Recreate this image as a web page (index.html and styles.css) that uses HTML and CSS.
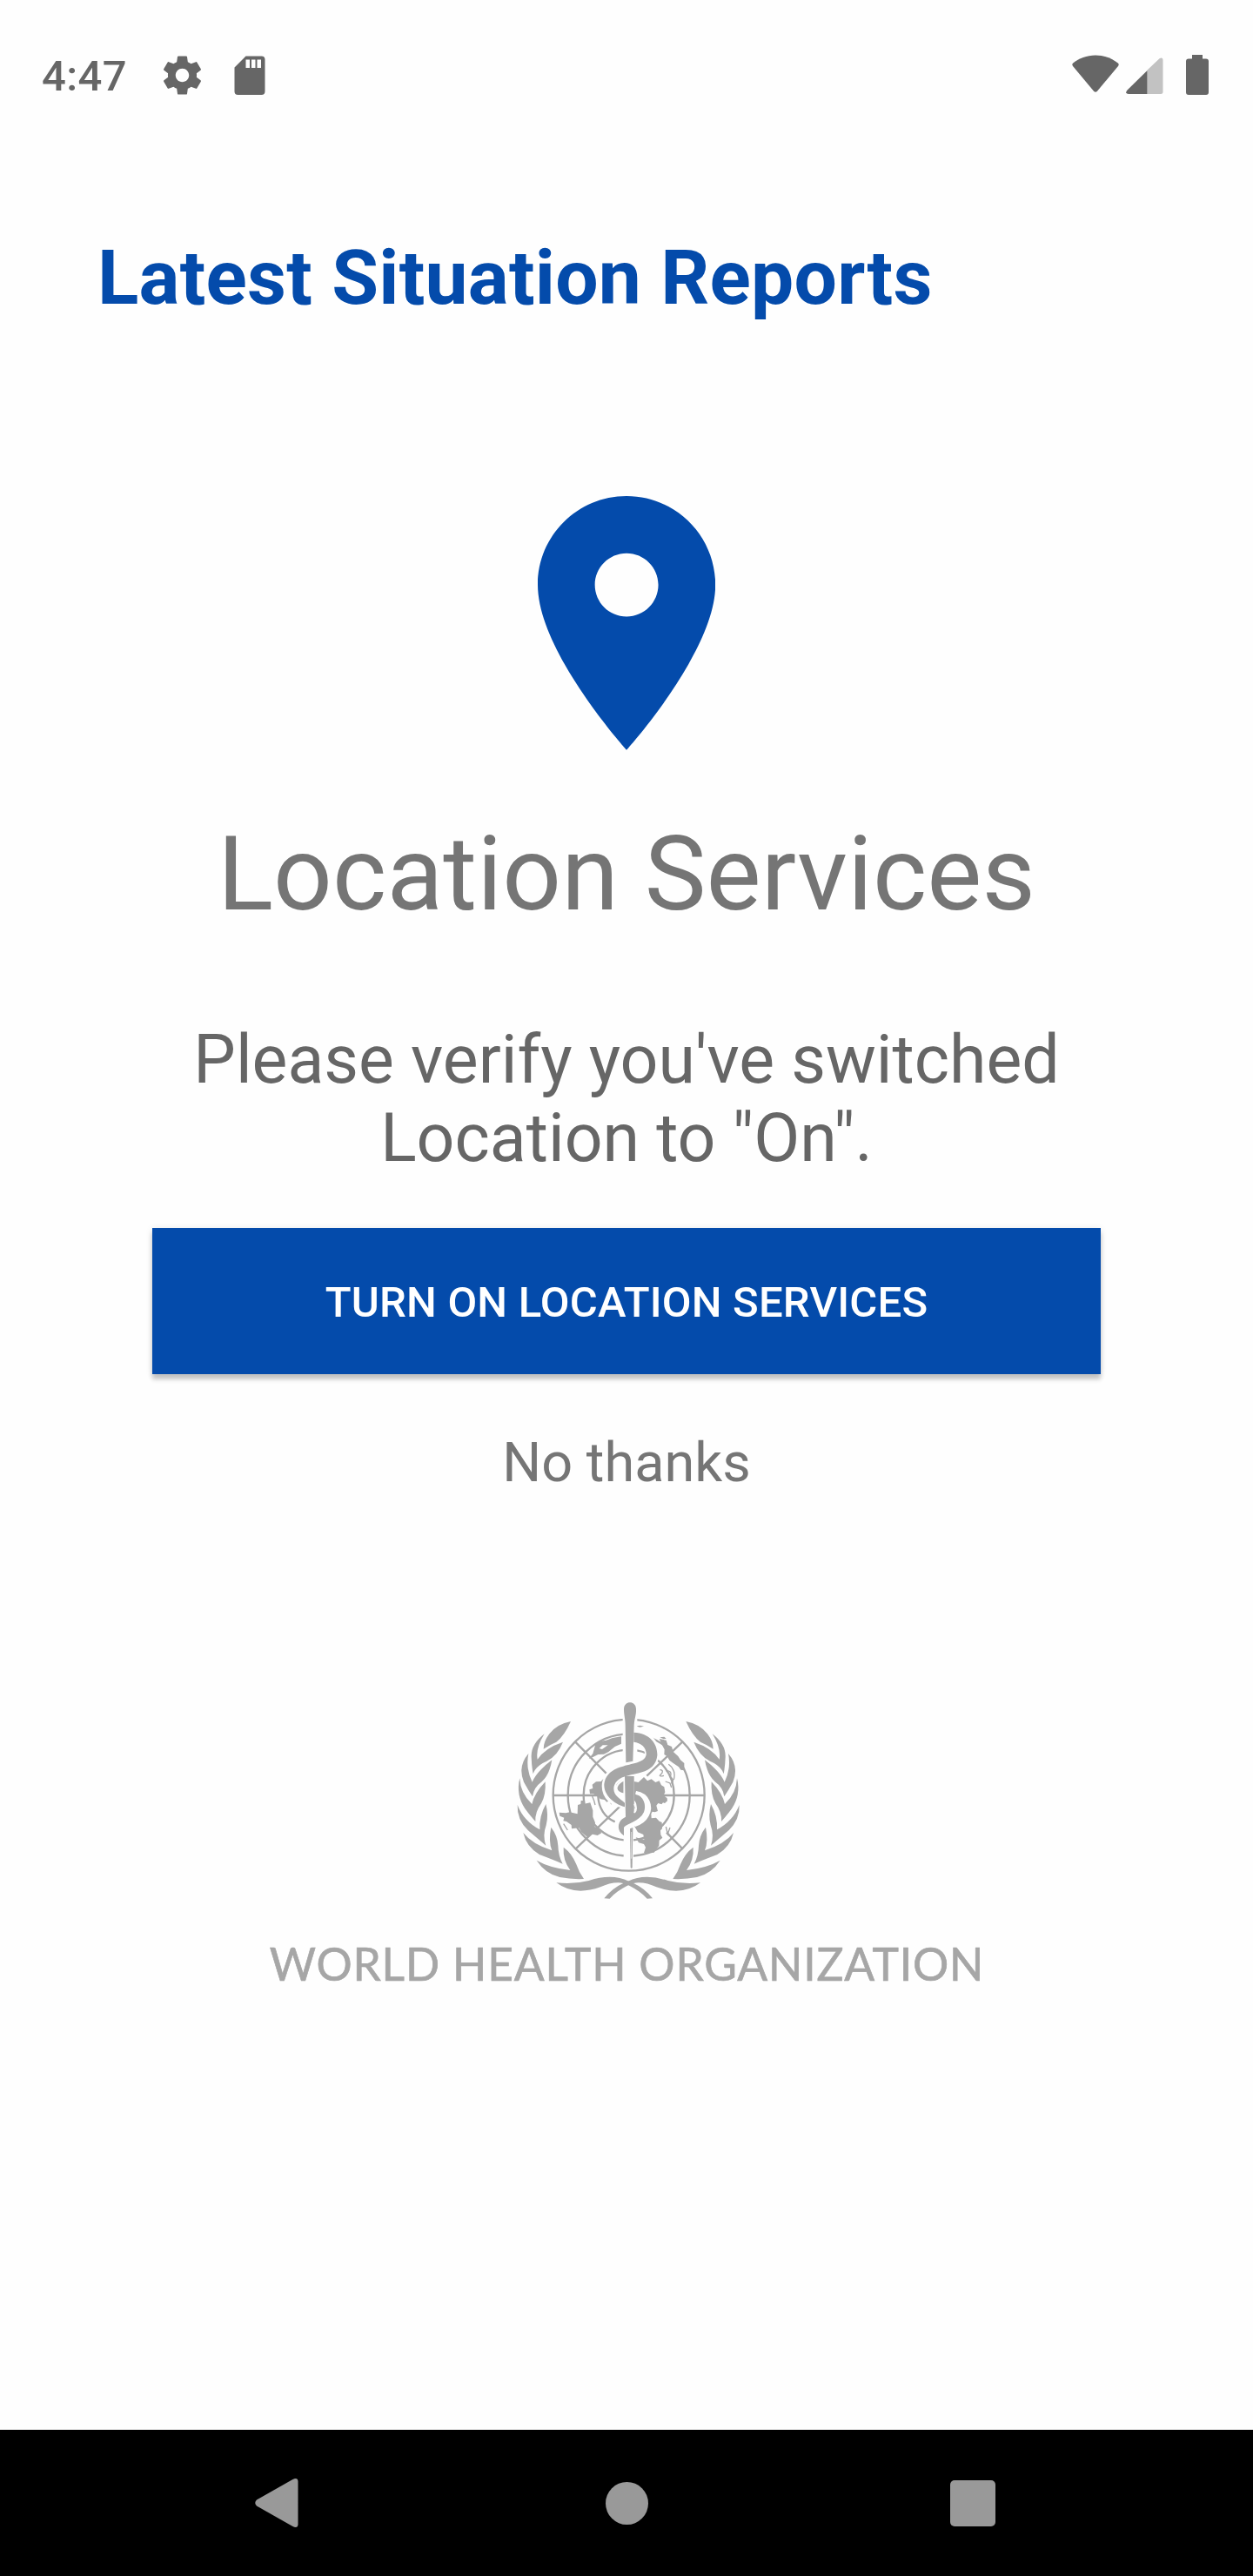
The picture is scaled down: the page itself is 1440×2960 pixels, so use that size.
FILE: index.html
```html
<!DOCTYPE html>
<html lang="en">
<head>
<meta charset="utf-8">
<title>Latest Situation Reports</title>
<link rel="stylesheet" href="styles.css">
</head>
<body>
<div class="screen">
  <header class="status">
    <span class="clock">4:47</span>
    <svg class="gear" viewBox="0 0 24 24"><path d="M19.43 12.98c.04-.32.07-.64.07-.98s-.03-.66-.07-.98l2.11-1.65c.19-.15.24-.42.12-.64l-2-3.46c-.12-.22-.39-.3-.61-.22l-2.49 1c-.52-.4-1.08-.73-1.69-.98l-.38-2.65C14.46 2.18 14.25 2 14 2h-4c-.25 0-.46.18-.49.42l-.38 2.65c-.61.25-1.17.59-1.69.98l-2.49-1c-.23-.09-.49 0-.61.22l-2 3.46c-.13.22-.07.49.12.64l2.11 1.65c-.04.32-.07.65-.07.98s.03.66.07.98l-2.11 1.65c-.19.15-.24.42-.12.64l2 3.46c.12.22.39.3.61.22l2.49-1c.52.4 1.08.73 1.69.98l.38 2.65c.03.24.24.42.49.42h4c.25 0 .46-.18.49-.42l.38-2.65c.61-.25 1.17-.59 1.69-.98l2.49 1c.23.09.49 0 .61-.22l2-3.46c.12-.22.07-.49-.12-.64l-2.11-1.65zM12 15.5c-1.93 0-3.5-1.57-3.5-3.5s1.57-3.5 3.5-3.5 3.5 1.57 3.5 3.5-1.57 3.5-3.5 3.5z"/></svg>
    <svg class="sdcard" viewBox="0 0 36 46"><path fill-rule="evenodd" d="M13.500.5H31.500A4 4 0 0 1 35.500 4.500V41a4 4 0 0 1-4 4H4.500a4 4 0 0 1-4-4V13.500ZM13.500 4.500V14H18V4.500ZM20 4.500V14h4.500V4.500ZM26.500 4.500V14H31V4.500Z"/></svg>
    <span class="spacer"></span>
    <svg class="wifi" viewBox="0 0 54 44"><path d="M1.200 9.500C8 4 17 .5 27 .5S46 4 52.800 9.500Q54.500 11 53 13L29 41.800Q27 43.800 25 41.800L1 13Q-.5 11 1.200 9.500Z"/></svg>
    <svg class="signal" viewBox="0 0 43 43"><path class="dim" d="M24.500 14.500L38.500 1.200Q42.500-1 42.500 3V39.500a2.500 2.500 0 0 1-2.500 2.500H24.500Z"/><path d="M24.500 15V42H3Q-1.500 41.500 1.300 37.800Z"/></svg>
    <svg class="battery" viewBox="0 0 26 46"><path d="M7 0H19V4.500H23A3 3 0 0 1 26 7.500V43a3 3 0 0 1-3 3H3a3 3 0 0 1-3-3V7.500A3 3 0 0 1 3 4.500H7Z"/></svg>
  </header>

  <main class="content">
    <h1 class="title">Latest Situation Reports</h1>
    <svg class="pin" viewBox="5 2 14 20"><path d="M12 2C8.13 2 5 5.13 5 9c0 5.25 7 13 7 13s7-7.75 7-13c0-3.87-3.13-7-7-7zm0 9.500c-1.380 0-2.500-1.120-2.500-2.500s1.120-2.500 2.500-2.500 2.500 1.120 2.500 2.500-1.120 2.500-2.500 2.500z"/></svg>
    <h2 class="heading">Location Services</h2>
    <p class="message">Please verify you've switched<br>Location to "On".</p>
    <button class="primary">TURN ON LOCATION SERVICES</button>
    <a class="skip">No thanks</a>

    <svg class="emblem" viewBox="0 0 870 780">
      <defs>
        <g id="laurel">
          <path d="M228 117Q180 126 154 160Q134 186 134 212Q155 198 178 188Q205 168 228 117Z"/>
          <path d="M137 160Q90 196 92 240Q93 272 98 298Q107 270 145 254Q182 236 201 188Q140 208 113 248Q106 210 137 160Z"/>
          <path d="M82 228Q44 272 66 326Q82 355 96 376Q100 345 128 325Q155 300 163 250Q110 290 95 326Q72 280 82 228Z"/>
          <path d="M52 313Q38 370 70 418Q90 445 106 462Q104 430 126 400Q143 370 140 325Q102 365 94 402Q54 365 52 313Z"/>
          <path d="M44 405Q42 455 80 492Q115 522 142 545Q130 510 143 475Q152 440 142 402Q118 445 121 490Q65 460 44 405Z"/>
          <path d="M64 501Q75 550 120 576Q170 595 200 608Q185 580 184 545Q182 510 160 482Q150 530 163 562Q95 540 64 501Z"/>
          <path d="M110 596Q140 642 190 654Q230 662 273 660Q255 635 247 610Q232 572 203 551Q200 595 226 630Q155 622 110 596Z"/>
          <path d="M178 673Q235 680 290 666Q370 640 428 668Q465 655 500 660C450 668 395 690 362 728L343 727Q370 692 410 674Q370 668 330 688Q240 720 178 673Z"/>
        </g>
      </defs>
      <g class="grid">
        <circle cx="428" cy="371" r="261"/>
        <circle cx="428" cy="371" r="210"/>
        <circle cx="428" cy="371" r="156"/>
        <path d="M166 372H400M540 372H690M243 187L350 296M245 556L410 398M613 556L558 500M613 187L490 305M322 375C324 415 345 448 380 463"/>
      </g>
      <g class="land">
        <path fill-rule="evenodd" d="M290 246L304 228L313 196L326 186L350 182L372 174L402 169V194L380 204L358 222L342 230L322 231L306 239ZM326 210L336 213L356 199L338 199Z"/>
        <path d="M533 177L557 182L562 198L576 204L581 222L598 237L606 250L619 261V286L607 284L600 274L580 260L568 251L560 237L550 231L551 214L543 199ZM535 172L550 170L557 176L548 178ZM452 133L468 131L480 134L466 137Z"/>
        <path d="M446 324L461 327L480 309L492 322L506 316L520 327L533 322L540 337L550 343L553 361L548 372L560 382L561 391L552 399L546 397L541 403L529 399L523 407L528 426L518 430L509 428L505 436L506 451L522 449L533 461L542 465L543 487L537 493L538 508L544 518L533 527L532 546L521 559L515 569L480 570L486 551L480 540L462 535L452 517L468 521L481 525L478 507L459 499L446 476Z"/>
        <path d="M292 352L304 348L302 335L315 325L332 324L340 315L352 322L385 322L410 310V410L395 402L378 399L374 391L367 404L360 391L352 395L344 387L330 385L320 374L306 367H294Z"/>
        <path d="M188 431L211 433L224 430L251 436L252 405L262 402L263 390H272L275 401L295 397L304 424V446L312 466L310 480L326 488L334 502L320 510L297 505L284 515L265 499L256 484L231 487L230 474L213 462L202 460L205 449L190 443Z"/>
        <path class="coast" d="M565 265Q592 285 583 318M555 287Q579 286 571 308Q588 320 574 331M535 284Q548 284 542 296Q525 310 549 304M554 324L570 330L575 345M302 375L308 390L312 405M203 470L217 492M556 480L562 505L570 483"/>
      </g>
      <path class="halo" d="M432 82V260M446 172C490 174 509 198 508 232C504 272 462 276 418 288C378 300 360 316 360 340C360 370 382 386 412 390M448 382C476 388 482 422 462 440C440 458 407 456 407 492"/>
      <path class="halo shaft" d="M427 300V600"/>
      <path d="M411 75C411 44 453 44 453 75C454 95 447 108 446 130L442 254L418 259L416 130C416 108 411 95 411 75Z"/>
      <path d="M445 155C502 158 528 195 526 235C520 292 460 294 428 303C391 311 376 329 376 350C377 374 398 382 414 398V412C372 400 341 368 343 333C347 301 371 281 408 272C448 260 483 259 488 232C490 209 471 190 445 188Z"/>
      <path d="M414 305L446 306V438L417 448Z"/>
      <path d="M447 366C481 374 489 406 480 430C465 462 423 469 411 482V511C386 495 389 467 405 454C421 441 438 440 447 432C459 414 455 397 447 390Z"/>
      <path class="gap-line" d="M452 363C494 369 508 410 492 440C482 460 463 470 447 475"/>
      <path class="gap-line thin" d="M412 318C377 336 378 358 407 372M447 402Q459 417 447 432"/>
      <path d="M432 487L442 483L440 620Q437 627 434 620Z"/>
      <path class="glint" d="M437 498V590"/>
      <use href="#laurel"/>
      <use href="#laurel" transform="matrix(-1 0 0 1 853 0)"/>
    </svg>
    <div class="org">WORLD HEALTH ORGANIZATION</div>
  </main>

  <nav class="navbar">
    <svg class="back" viewBox="0 0 50 58"><path d="M2 25.500L43 2.200Q49-1 49.500 4V54Q49 59 43 55.800L2 32.500Q-1.500 29 2 25.500Z"/></svg>
    <span class="home"></span>
    <span class="recent"></span>
  </nav>
</div>
</body>
</html>
```
FILE: styles.css
```css
* { box-sizing: border-box; }
body { margin: 0; background: #fefefe; font-family: Roboto, sans-serif; }
h1, h2, p { margin: 0; }
svg { display: block; flex: none; }
.screen { width: 1440px; height: 2960px; display: flex; flex-direction: column; background: #fefefe; }

.status { height: 168px; padding: 0 51px 0 48px; display: flex; align-items: flex-start; fill: #666; }
.clock { margin-top: 59px; width: 140px; font-size: 49px; line-height: 58px; font-weight: 500; letter-spacing: .4px; color: #666; }
.gear { width: 53px; height: 53px; margin: 60px 0 0 -5px; }
.sdcard { width: 36px; height: 46px; margin: 63.500px 0 0 32.500px; }
.spacer { flex: 1; }
.wifi { width: 54px; height: 44px; margin: 63px 8px 0 0; }
.signal { width: 43px; height: 43px; margin: 65.500px 26.500px 0 0; }
.signal .dim { fill: #c2c2c2; }
.battery { width: 26px; height: 46px; margin-top: 63px; }

.content { flex: 1; display: flex; flex-direction: column; align-items: center; }
.title { align-self: flex-start; margin: 100px 0 0 112px; font-size: 87.500px; line-height: 103px; font-weight: 700; letter-spacing: .26px; color: #044bab; white-space: nowrap; }
.pin { width: 204.200px; height: 291.700px; margin-top: 199px; fill: #044bab; }
.heading { margin-top: 73px; font-size: 119px; line-height: 140px; font-weight: 400; letter-spacing: .1px; color: #757575; }
.message { margin-top: 98.300px; font-size: 77px; line-height: 90px; color: #666; text-align: center; }
.primary { width: 1090px; height: 168px; margin-top: 58px; padding: 5px 0 0; border: 0; background: #044bab; color: #fff; font: 500 49px/58px Roboto, sans-serif; letter-spacing: .2px; box-shadow: 0 6px 5px rgba(0, 0, 0, .2), 0 1px 8px rgba(0, 0, 0, .1); }
.skip { margin-top: 65px; font-size: 63px; line-height: 74px; color: #757575; }

.emblem { width: 290px; height: 260px; margin: 221.500px 0 0 10px; fill: #a6a6a6; }
.grid { fill: none; stroke: #a6a6a6; stroke-width: 7; }
.coast { fill: none; stroke: #a6a6a6; stroke-width: 4; }
.halo { fill: none; stroke: #fefefe; stroke-width: 50; }
.halo.shaft { stroke-width: 34; }
.gap-line { fill: none; stroke: #fefefe; stroke-width: 12; }
.gap-line.thin { stroke-width: 6; }
.glint { stroke: #fefefe; stroke-width: 2; }
.org { margin: 26px 0 0 1px; font: 400 51.500px/62px Lato, sans-serif; letter-spacing: .85px; color: #a6a6a6; -webkit-text-stroke: .7px #a6a6a6; white-space: nowrap; }

.navbar { height: 168px; padding: 0 296px 0 293px; background: #000; display: flex; align-items: center; justify-content: space-between; }
.back { width: 50px; height: 58px; fill: #999; }
.home { width: 49px; height: 49px; margin-left: 6px; border-radius: 50%; background: #999; }
.recent { width: 52px; height: 53px; border-radius: 5px; background: #999; }
```
